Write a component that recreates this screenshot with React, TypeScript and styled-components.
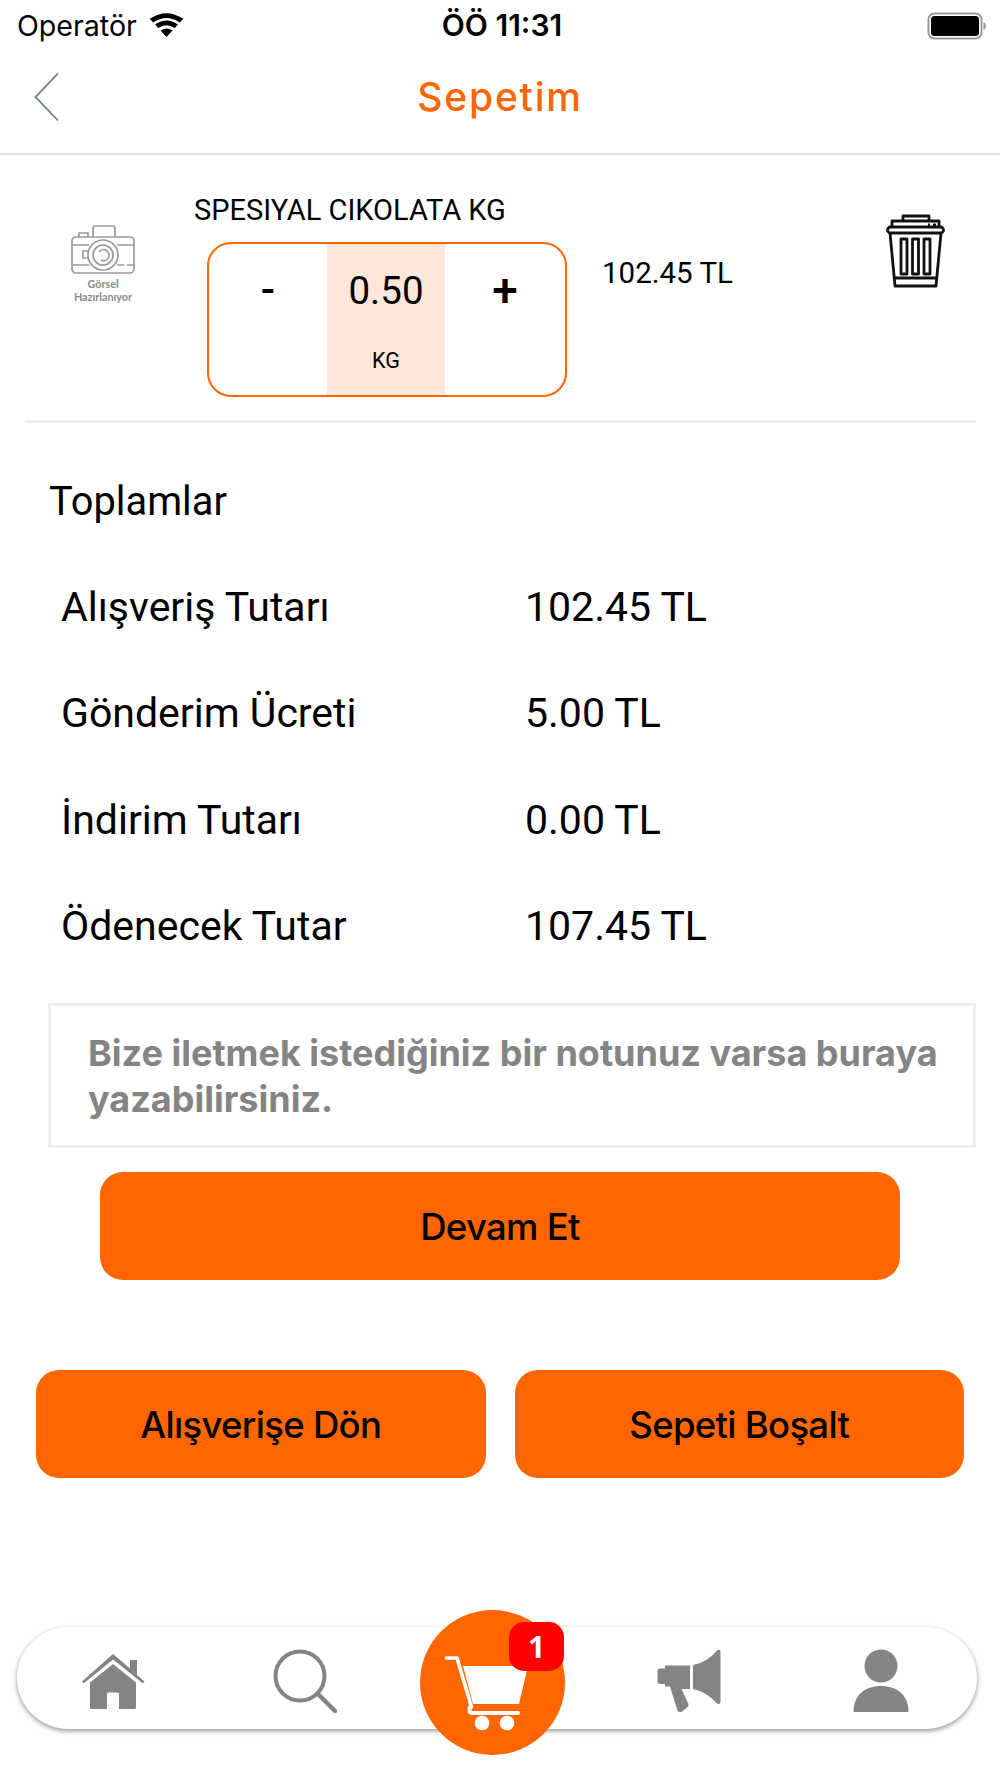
import React from "react";
import styled, { createGlobalStyle } from "styled-components";

const ORANGE = "#ff6600";
const GRAY = "#848484";

const GlobalStyle = createGlobalStyle`
  html, body {
    margin: 0;
    padding: 0;
    background: #fff;
  }
  * {
    box-sizing: border-box;
  }
`;

const Page = styled.div`
  width: 1000px;
  height: 1778px;
  display: flex;
  flex-direction: column;
  background: #fff;
  color: #000;
  font-family: Roboto, "Liberation Sans", sans-serif;
  overflow: hidden;
`;

const StatusBar = styled.div`
  height: 50px;
  padding: 0 13px 0 17px;
  display: grid;
  grid-template-columns: 1fr auto 1fr;
  align-items: center;
  font-family: Inter, Roboto, sans-serif;
  font-size: 28.6px;
`;

const StatusLeft = styled.div`
  display: flex;
  align-items: center;
  gap: 11px;
`;

const Clock = styled.div`
  font-weight: 600;
  font-size: 30px;
`;

const StatusRight = styled.div`
  padding-top: 2px;
  display: flex;
  justify-content: flex-end;
`;

const Header = styled.header`
  height: 105px;
  padding: 0 34px 10px;
  display: flex;
  align-items: center;
  position: relative;
  border-bottom: 2px solid #e2e2e2;
`;

const Title = styled.h1`
  position: absolute;
  left: 0;
  right: 0;
  margin: 0;
  padding-bottom: 0;
  text-align: center;
  font-family: Inter, Roboto, sans-serif;
  color: ${ORANGE};
  font-size: 39px;
  font-weight: 500;
  letter-spacing: 1.8px;
`;

const CartItem = styled.section`
  margin: 0 24px 0 25px;
  height: 268px;
  padding: 0 31px 0 46px;
  display: flex;
  border-bottom: 3px solid #eeeeee;
`;

const Thumb = styled.div`
  width: 64px;
  padding-top: 70px;
  display: flex;
  flex-direction: column;
  align-items: center;
  color: #8a8a8a;
  font-family: Lato, sans-serif;
  font-size: 10.8px;
  font-weight: 700;
  line-height: 13px;
  text-align: center;
  white-space: nowrap;
`;

const ThumbLabel = styled.div`
  margin-top: 2px;
`;

const ItemMain = styled.div`
  margin-left: 72px;
  display: flex;
  flex-direction: column;
`;

const ItemName = styled.div`
  margin: 39px 0 0 -13px;
  font-size: 29px;
  line-height: 32px;
  white-space: nowrap;
`;

const Stepper = styled.div`
  margin: 16px 0 0 0;
  width: 360px;
  height: 155px;
  display: grid;
  grid-template-columns: 118px 118px 1fr;
  border: 2.5px solid ${ORANGE};
  border-radius: 24px;
  overflow: hidden;
`;

const StepButton = styled.div<{ $bold?: boolean }>`
  padding-top: 22px;
  text-align: center;
  font-size: ${(p) => (p.$bold ? 46 : 42)}px;
  line-height: 48px;
  font-weight: 500;
`;

const StepValue = styled.div`
  background: #fee6d9;
  display: flex;
  flex-direction: column;
  align-items: center;
`;

const Quantity = styled.div`
  margin-top: 26px;
  font-size: 38.5px;
  line-height: 42px;
`;

const Unit = styled.div`
  margin-top: 37px;
  font-size: 21.5px;
  line-height: 24px;
`;

const ItemPrice = styled.div`
  margin: 102px 0 0 35px;
  font-size: 29.5px;
  line-height: 32px;
  white-space: nowrap;
`;

const TrashBox = styled.div`
  margin-left: auto;
  padding-top: 59px;
`;

const Totals = styled.section`
  padding: 54px 0 0 49px;
`;

const TotalsTitle = styled.h2`
  margin: 0;
  font-size: 39.8px;
  font-weight: 400;
  line-height: 50px;
`;

const TotalRow = styled.div`
  height: 106.3px;
  padding-left: 12px;
  display: grid;
  grid-template-columns: 464px 1fr;
  align-items: center;
  font-size: 41px;
`;

const TotalRows = styled.div`
  margin-top: 27px;
`;

const Note = styled.div`
  margin: 24px 24px 0 48px;
  height: 145px;
  padding: 24px 30px 0 37px;
  border: 3px solid #eeeeee;
  font-family: Inter, Roboto, sans-serif;
  font-weight: 700;
  font-size: 36px;
  line-height: 46px;
  color: ${GRAY};
`;

const PrimaryButton = styled.div`
  height: 108px;
  padding-top: 2px;
  background: ${ORANGE};
  border-radius: 23px;
  display: flex;
  align-items: center;
  justify-content: center;
  font-family: Inter, Roboto, sans-serif;
  font-size: 36.5px;
  font-weight: 500;
  letter-spacing: -0.7px;
`;

const ContinueWrap = styled.div`
  margin: 24px 100px 0;
`;

const ButtonRow = styled.div`
  margin: 90px 36px 0;
  display: grid;
  grid-template-columns: 1fr 1fr;
  gap: 29px;
`;

const TabBar = styled.nav`
  margin: 149px 0 0 17px;
  width: 960px;
  height: 102px;
  padding-top: 6px;
  display: grid;
  grid-template-columns: repeat(5, 1fr);
  align-items: center;
  justify-items: center;
  position: relative;
  background: #fff;
  border-radius: 51px;
  box-shadow: 0 2px 5px rgba(0, 0, 0, 0.42);
`;

const CartBubble = styled.div`
  position: absolute;
  left: 403px;
  top: -17px;
  width: 145px;
  height: 145px;
  padding: 16px 14px 0 0;
  display: flex;
  align-items: center;
  justify-content: center;
  background: ${ORANGE};
  border-radius: 50%;
`;

const Badge = styled.div`
  position: absolute;
  left: 89px;
  top: 12px;
  width: 55px;
  height: 49px;
  display: flex;
  align-items: center;
  justify-content: center;
  background: #ff0000;
  border-radius: 15px;
  color: #fff;
  font-family: "Open Sans", sans-serif;
  font-size: 30px;
  font-weight: 700;
`;

const WifiIcon = () => (
  <svg width="37" height="26" viewBox="0 0 34 26" preserveAspectRatio="none">
    <path d="M17 25 L11.500 18.500 Q17 14.500 22.500 18.500 Z" fill="#000" />
    <path d="M9.500 16 L6.500 12.500 Q17 4.500 27.500 12.500 L24.500 16 Q17 10.500 9.500 16 Z" fill="#000" />
    <path d="M4.800 10.500 L1.500 6.800 Q17 -4.500 32.500 6.800 L29.200 10.500 Q17 1.500 4.800 10.500 Z" fill="#000" />
  </svg>
);

const BatteryIcon = () => (
  <svg width="60" height="28" viewBox="0 0 60 28">
    <rect x="1.500" y="1.500" width="53" height="25" rx="6" fill="#fff" stroke="#9a9a9a" strokeWidth="2" />
    <rect x="4" y="4" width="48" height="20" rx="3.500" fill="#000" />
    <path d="M56.500 10 Q59 11 59 14 Q59 17 56.500 18 Z" fill="#9a9a9a" />
  </svg>
);

const BackIcon = () => (
  <svg width="26" height="50" viewBox="0 0 26 50">
    <path d="M24 1.500 L1.500 25 L24 48.500" fill="none" stroke="#6f7885" strokeWidth="1.800" />
  </svg>
);

const CameraIcon = () => (
  <svg width="64" height="50" viewBox="0 0 64 50" fill="none" stroke="#9a9a9a" strokeWidth="1.700">
    <rect x="1" y="12" width="62" height="36" rx="4" />
    <path d="M8 12 V8 H17 V12" />
    <path d="M22 12 V3 Q22 1 24 1 H42 Q44 1 44 3 V12" />
    <path d="M1 20 H18 M46 20 H63" />
    <path d="M1 40 H18 M46 40 H53 M56 40 H63" />
    <circle cx="32" cy="30" r="15" />
    <circle cx="32" cy="30" r="10" />
    <path d="M28 27 A5.500 5.500 0 1 1 30 35" />
    <path d="M17 26 H12 V33 H17" />
  </svg>
);

const TrashIcon = () => (
  <svg width="59" height="74" viewBox="0 0 59 74" fill="none" stroke="#111" strokeWidth="2.800" strokeLinejoin="round">
    <path d="M17 7 V2 H43 V7" />
    <path d="M6 13 V7 H53 V13" />
    <rect x="1.500" y="13" width="56" height="6" rx="3" />
    <path d="M4 19 L9 72 H50 L55 19" />
    <path d="M9 64 H50" />
    <rect x="15" y="25" width="6" height="35" />
    <rect x="26.500" y="25" width="6" height="35" />
    <rect x="38" y="25" width="6" height="35" />
    <path d="M42 11 H44 M47 11 H50" />
  </svg>
);

const HomeIcon = () => (
  <svg width="64" height="57" viewBox="0 0 64 57" fill={GRAY}>
    <path d="M1 28.500 L32 1 L49 15.500 V7 H56 V22 L63.500 28.500 L62 30.500 L32 6.500 L2.500 30.500 Z" />
    <path d="M32 11 L55 29.500 V54.500 Q55 56 53.500 56 H38 V41 Q38 39.500 36.500 39.500 H27.500 Q26 39.500 26 41 V56 H10.500 Q9 56 9 54.500 V29.500 Z" />
  </svg>
);

const SearchIcon = () => (
  <svg width="64" height="64" viewBox="0 0 64 64" fill="none" stroke={GRAY}>
    <circle cx="27" cy="27" r="24.500" strokeWidth="4" />
    <path d="M45 45 L62 62" strokeWidth="4.500" strokeLinecap="round" />
  </svg>
);

const MegaphoneIcon = () => (
  <svg width="64" height="64" viewBox="0 0 64 64" fill={GRAY}>
    <path d="M36 16 Q51 13 60.500 1 Q63.500 0 63.500 3 V53 Q63 56 60 54.500 Q50 43 36 40 Z" />
    <path d="M8 16.500 H33 V40 H24.500 L31.500 55 Q32 57 30.500 58 L25 62.500 Q22 64 20.500 61.500 L13 37.500 H8 V35 H3 Q0.500 35 0.500 32.500 V22 Q0.500 19.500 3 19.500 H8 Z" />
  </svg>
);

const UserIcon = () => (
  <svg width="56" height="64" viewBox="0 0 56 64" fill={GRAY}>
    <circle cx="28" cy="17" r="16.500" />
    <path d="M0.500 63 C0.500 46 12 37 28 37 C44 37 55.500 46 55.500 63 Z" />
  </svg>
);

const CartIcon = () => (
  <svg width="90" height="80" viewBox="0 0 90 80" fill="#fff">
    <path d="M5.500 7 H16 L30.500 56" fill="none" stroke="#fff" strokeWidth="3.600" strokeLinecap="round" strokeLinejoin="round" />
    <path d="M22 15 H87 L78 53 H32 Z" />
    <path d="M29 56 Q27 62 32 62 H77" fill="none" stroke="#fff" strokeWidth="4.200" strokeLinecap="round" />
    <circle cx="41" cy="72" r="7.300" />
    <circle cx="66" cy="72" r="7.300" />
  </svg>
);

const totals = [
  ["Alışveriş Tutarı", "102.45 TL"],
  ["Gönderim Ücreti", "5.00 TL"],
  ["İndirim Tutarı", "0.00 TL"],
  ["Ödenecek Tutar", "107.45 TL"],
];

const App = () => {
  return (
    <Page>
      <GlobalStyle />
      <StatusBar>
        <StatusLeft>
          Operatör
          <WifiIcon />
        </StatusLeft>
        <Clock>ÖÖ 11:31</Clock>
        <StatusRight>
          <BatteryIcon />
        </StatusRight>
      </StatusBar>

      <Header>
        <BackIcon />
        <Title>Sepetim</Title>
      </Header>

      <CartItem>
        <Thumb>
          <CameraIcon />
          <ThumbLabel>Görsel</ThumbLabel>
          <div>Hazırlanıyor</div>
        </Thumb>
        <ItemMain>
          <ItemName>SPESIYAL CIKOLATA KG</ItemName>
          <Stepper>
            <StepButton>-</StepButton>
            <StepValue>
              <Quantity>0.50</Quantity>
              <Unit>KG</Unit>
            </StepValue>
            <StepButton $bold>+</StepButton>
          </Stepper>
        </ItemMain>
        <ItemPrice>102.45 TL</ItemPrice>
        <TrashBox>
          <TrashIcon />
        </TrashBox>
      </CartItem>

      <Totals>
        <TotalsTitle>Toplamlar</TotalsTitle>
        <TotalRows>
          {totals.map(([label, value]) => (
            <TotalRow key={label}>
              <span>{label}</span>
              <span>{value}</span>
            </TotalRow>
          ))}
        </TotalRows>
      </Totals>

      <Note>Bize iletmek istediğiniz bir notunuz varsa buraya yazabilirsiniz.</Note>

      <ContinueWrap>
        <PrimaryButton>Devam Et</PrimaryButton>
      </ContinueWrap>

      <ButtonRow>
        <PrimaryButton>Alışverişe Dön</PrimaryButton>
        <PrimaryButton>Sepeti Boşalt</PrimaryButton>
      </ButtonRow>

      <TabBar>
        <HomeIcon />
        <SearchIcon />
        <span />
        <MegaphoneIcon />
        <UserIcon />
        <CartBubble>
          <CartIcon />
          <Badge>1</Badge>
        </CartBubble>
      </TabBar>
    </Page>
  );
};

export default App;
